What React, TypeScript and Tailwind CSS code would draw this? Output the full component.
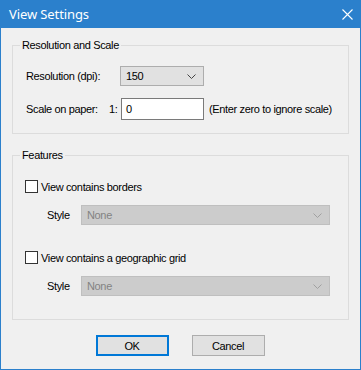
import React from 'react';

const font = { fontFamily: '"Liberation Sans", Arial, sans-serif', letterSpacing: '-0.35px' };

function Chevron({ color }: { color: string }) {
  return (
    <svg width="9" height="5" viewBox="0 0 9 5" className="shrink-0">
      <path d="M0.5 0.5 L4.5 4.5 L8.5 0.5" fill="none" stroke={color} strokeWidth="1" />
    </svg>
  );
}

function Select({ value, width, disabled }: { value: string; width: string; disabled?: boolean }) {
  return (
    <div
      className={`${width} h-[20px] flex items-center justify-between pl-[5px] pr-[7px] border ${
        disabled ? 'bg-[#cccccc] border-[#bfbfbf] text-[#838383]' : 'bg-[#e1e1e1] border-[#adadad] text-black'
      }`}
    >
      <span>{value}</span>
      <Chevron color={disabled ? '#a0a0a0' : '#444444'} />
    </div>
  );
}

function Checkbox({ label }: { label: string }) {
  return (
    <div className="h-[13px] flex items-center gap-[3px] pl-[12px]">
      <div className="w-[13px] h-[13px] border border-[#333333] bg-white shrink-0" />
      <span>{label}</span>
    </div>
  );
}

export default function App() {
  return (
    <div
      className="w-[361px] h-[370px] bg-[#f0f0f0] border border-t-0 border-[#2b80cc] flex flex-col text-[11px] leading-[14px] text-black whitespace-nowrap"
      style={font}
    >
      {/* Title bar */}
      <div className="h-[28px] -mx-px bg-[#2b80cc] flex items-center justify-between pl-[9px] pr-[8px] shrink-0">
        <span
          className="text-white text-[13px] tracking-[-0.1px]"
          style={{ fontFamily: '"Noto Sans", "Open Sans", sans-serif' }}
        >
          View Settings
        </span>
        <svg width="11" height="11" viewBox="0 0 11 11">
          <path d="M0.5 0.5 L10.5 10.5 M10.5 0.5 L0.5 10.5" stroke="white" strokeWidth="1.1" />
        </svg>
      </div>

      <div className="flex flex-col px-[11px]">
        {/* Resolution and Scale */}
        <fieldset className="mt-[10px] border border-[#dcdcdc]">
          <legend className="ml-[7px] px-[2px]">Resolution and Scale</legend>
          <div className="pt-[14px] pb-[13px] pl-[13px]">
            <div className="h-[20px] flex items-center">
              <span className="w-[94px]">Resolution (dpi):</span>
              <Select value="150" width="w-[84px]" />
            </div>
            <div className="mt-[12px] h-[22px] flex items-center">
              <span className="w-[83px]">Scale on paper:</span>
              <span className="w-[12px]">1:</span>
              <div className="w-[83px] h-[22px] border border-[#7a7a7a] bg-white flex items-center pl-[4px]">0</div>
              <span className="ml-[5px]">(Enter zero to ignore scale)</span>
            </div>
          </div>
        </fieldset>

        {/* Features */}
        <fieldset className="mt-[14px] border border-[#dcdcdc]">
          <legend className="ml-[7px] px-[2px]">Features</legend>
          <div className="pt-[18px] pb-[23px]">
            <Checkbox label="View contains borders" />
            <div className="mt-[12px] h-[20px] flex items-center pl-[34px]">
              <span className="w-[34px]">Style</span>
              <Select value="None" width="w-[249px]" disabled />
            </div>
            <div className="mt-[26px]">
              <Checkbox label="View contains a geographic grid" />
            </div>
            <div className="mt-[12px] h-[20px] flex items-center pl-[34px]">
              <span className="w-[34px]">Style</span>
              <Select value="None" width="w-[249px]" disabled />
            </div>
          </div>
        </fieldset>

        {/* Buttons */}
        <div className="mt-[15px] flex justify-center gap-[23px] pr-[1px]">
          <button className="w-[73px] h-[21px] bg-[#e1e1e1] border-2 border-[#0078d7] flex items-center justify-center">
            OK
          </button>
          <button className="w-[73px] h-[21px] bg-[#e1e1e1] border border-[#adadad] flex items-center justify-center">
            Cancel
          </button>
        </div>
      </div>
    </div>
  );
}
